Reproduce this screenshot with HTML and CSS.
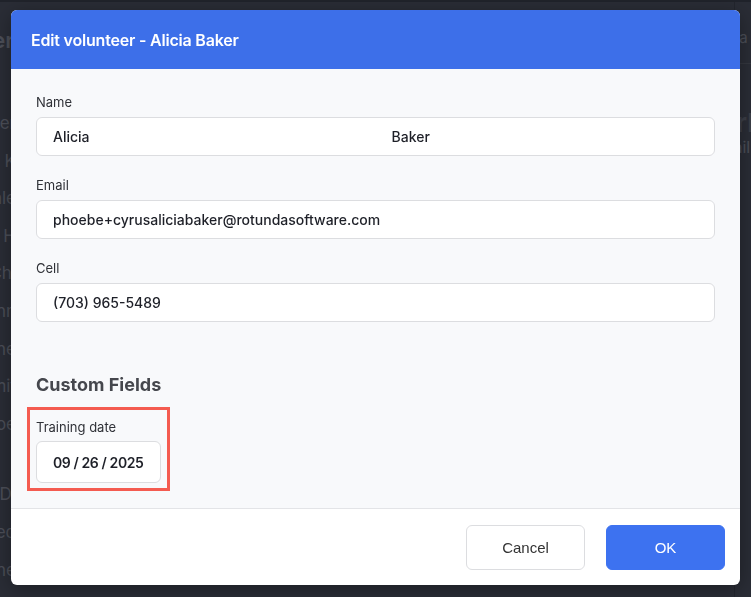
FILE: index.html
```html
<!DOCTYPE html>
<html lang="en">
<head>
  <meta charset="UTF-8">
  <meta name="viewport" content="width=device-width, initial-scale=1.0">
  <title>Volunteers</title>
  <link rel="stylesheet" href="styles.css">
</head>
<body>

<!-- Volunteer list behind the dialog -->
<div class="page">
  <div class="page-list">
    <div class="page-title">Volunteer</div>
    <div class="page-row">Alicia Baker</div>
    <div class="page-row">Kim K</div>
    <div class="page-row">Mia Hale</div>
    <div class="page-row">Tom H</div>
    <div class="page-row">Li Chi</div>
    <div class="page-row">Ann Flynn</div>
    <div class="page-row">Jane</div>
    <div class="page-row">Ed Smit</div>
    <div class="page-row">Joe</div>
    <div class="page-row gap">Ray Di</div>
    <div class="page-row">Fred</div>
    <div class="page-row">Anne</div>
  </div>
  <div class="page-side">
    <div class="side-tab">Data</div>
    <div class="side-name">Mark</div>
    <div class="side-meta">Mail</div>
    <div class="side-meta">9</div>
  </div>
</div>

<!-- Edit dialog -->
<div class="modal">
  <div class="modal-header">Edit volunteer - Alicia Baker</div>

  <div class="modal-body">
    <div class="field">
      <label class="field-label">Name</label>
      <div class="input split">
        <span class="input-part">Alicia</span>
        <span class="input-part">Baker</span>
      </div>
    </div>

    <div class="field">
      <label class="field-label">Email</label>
      <div class="input">phoebe+cyrusaliciabaker@rotundasoftware.com</div>
    </div>

    <div class="field">
      <label class="field-label">Cell</label>
      <div class="input">(703) 965-5489</div>
    </div>

    <h2 class="section-title">Custom Fields</h2>

    <div class="custom-field">
      <label class="field-label">Training date</label>
      <div class="input date">09 / 26 / 2025</div>
    </div>
  </div>

  <div class="modal-footer">
    <button class="btn">Cancel</button>
    <button class="btn btn-primary">OK</button>
  </div>
</div>

</body>
</html>
```

FILE: styles.css
```css
/* Dark backdrop with the list page dimmed behind it */
body {
  margin: 0;
  height: 597px;
  overflow: hidden;
  background-color: #2a2d36;
  font-family: Inter, "Noto Sans", sans-serif;
  border-top: 2px solid #20232b;
  box-sizing: border-box;
}

.page {
  display: flex;
  justify-content: space-between;
  height: 100%;
  color: #4c4f58;
}

.page-list {
  display: flex;
  flex-direction: column;
  align-items: flex-end;
  width: 120px;
  margin-left: -106px;
}

.page-title {
  font-size: 22px;
  line-height: 27px;
  font-weight: 600;
  margin-top: 25px;
  margin-bottom: 51px;
}

.page-row {
  font-size: 17px;
  height: 37.6px;
  line-height: 37.6px;
  margin-right: -2px;
}

.page-row.gap {
  margin-top: 33px;
}

.page-side {
  width: 14px;
  overflow: hidden;
  border-left: 1px solid #23262e;
  padding-left: 2px;
}

.side-tab {
  font-size: 15px;
  padding: 26px 0 16px;
  border-bottom: 1px solid #34373f;
  margin-left: -22px;
}

.side-name {
  font-size: 26px;
  line-height: 30px;
  font-weight: 700;
  margin-top: 44px;
  margin-left: -40px;
  color: #3c3f48;
}

.side-meta {
  font-size: 16px;
  margin-left: -18px;
  line-height: 19px;
}

/* Dialog */
.modal {
  position: fixed;
  top: 10px;
  left: 11px;
  width: 729px;
  height: 575px;
  display: flex;
  flex-direction: column;
  border-radius: 6px;
  overflow: hidden;
  background-color: #fff;
  box-shadow: 0 4px 20px rgba(0, 0, 0, 0.35);
}

.modal-header {
  height: 59px;
  flex-shrink: 0;
  background-color: #3d6fe9;
  color: #fff;
  font-size: 16px;
  font-weight: 600;
  letter-spacing: -0.2px;
  padding: 0 20px;
  display: flex;
  align-items: center;
}

.modal-body {
  flex: 1;
  background-color: #f8f9fb;
  padding: 25px 25px 0;
  border-bottom: 1px solid #e3e4e7;
}

.field {
  display: flex;
  flex-direction: column;
  gap: 7px;
  margin-bottom: 21px;
}

.field-label {
  font-size: 13px;
  line-height: 16px;
  color: #2f3137;
}

.input {
  height: 39px;
  box-sizing: border-box;
  border: 1px solid #dcdde0;
  border-radius: 6px;
  background-color: #fff;
  padding: 0 16px;
  display: flex;
  align-items: center;
  font-size: 14px;
  font-weight: 500;
  color: #1e2028;
  white-space: nowrap;
}

.input.split {
  padding: 0;
}

.input-part {
  flex: 1;
  padding: 0 16px;
}

.section-title {
  margin: 52px 0 11px;
  font-size: 18px;
  line-height: 22px;
  font-weight: 700;
  color: #45474d;
}

/* Highlighted custom field */
.custom-field {
  display: inline-flex;
  flex-direction: column;
  gap: 6px;
  padding: 9px 6px 5px 6px;
  margin-left: -9px;
  border: 3px solid #f45b50;
}

.input.date {
  width: 125px;
  height: 42px;
  font-size: 14px;
  font-weight: 600;
  letter-spacing: -0.4px;
}

.modal-footer {
  height: 76px;
  flex-shrink: 0;
  display: flex;
  justify-content: flex-end;
  align-items: center;
  gap: 21px;
  padding: 0 15px 0 0;
}

.btn {
  width: 119px;
  height: 45px;
  border: 1px solid #dcdde0;
  border-radius: 6px;
  background-color: #fff;
  font-family: "Liberation Sans", Arial, sans-serif;
  font-size: 15px;
  color: #333;
  cursor: pointer;
}

.btn-primary {
  border-color: #3d72f0;
  background-color: #3d72f0;
  color: #fff;
}
```
